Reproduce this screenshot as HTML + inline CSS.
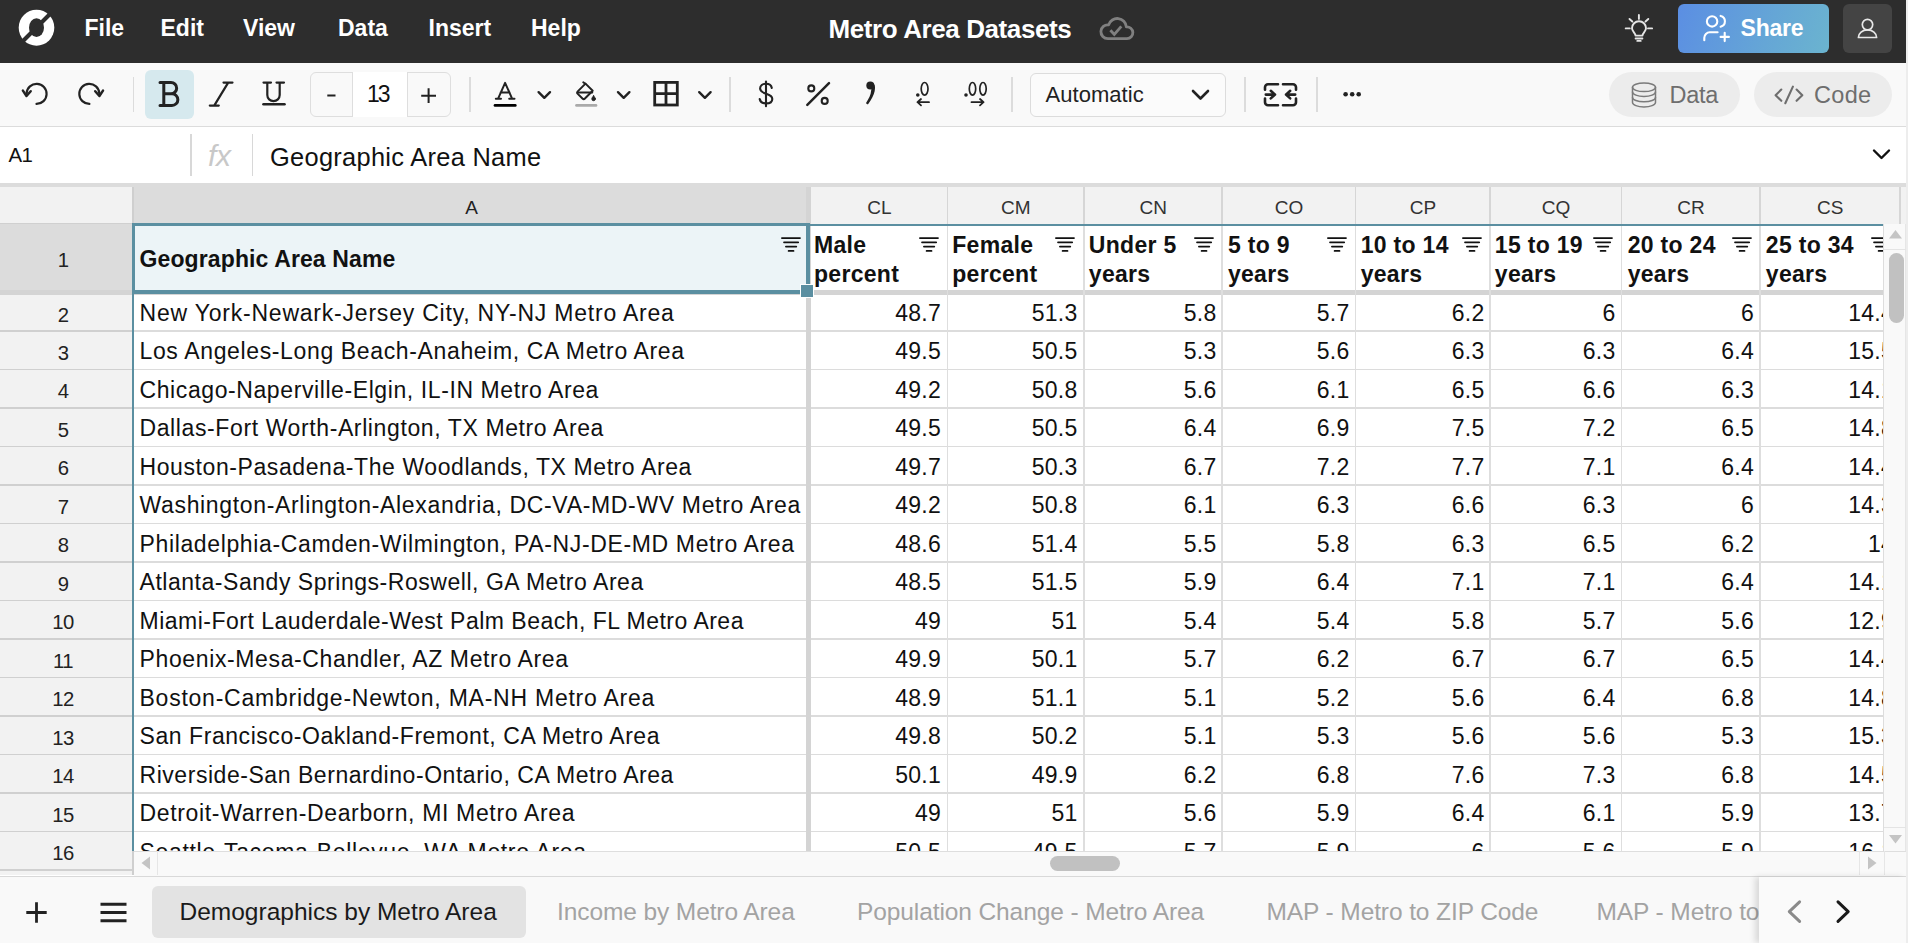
<!DOCTYPE html><html><head><meta charset="utf-8"><style>
*{box-sizing:border-box;margin:0;padding:0}
html,body{width:1908px;height:943px;overflow:hidden;background:#ededed;font-family:"Liberation Sans", sans-serif;}
.ab{position:absolute}
.t{position:absolute;white-space:nowrap;line-height:1}
</style></head><body>
<div class="ab" style="left:0;top:0;width:1906px;height:943px;overflow:hidden;background:#fff">

<div class="ab" style="left:0;top:0;width:1906px;height:63px;background:#2d2d2d"></div>
<div class="t" style="left:84.5px;top:17.2px;font-size:23px;font-weight:700;color:#fff">File</div>
<div class="t" style="left:160.5px;top:17.2px;font-size:23px;font-weight:700;color:#fff">Edit</div>
<div class="t" style="left:243px;top:17.2px;font-size:23px;font-weight:700;color:#fff">View</div>
<div class="t" style="left:338px;top:17.2px;font-size:23px;font-weight:700;color:#fff">Data</div>
<div class="t" style="left:428.5px;top:17.2px;font-size:23px;font-weight:700;color:#fff">Insert</div>
<div class="t" style="left:531px;top:17.2px;font-size:23px;font-weight:700;color:#fff">Help</div>
<div class="t" style="left:828.5px;top:15.8px;font-size:26px;font-weight:700;color:#fff;letter-spacing:-0.4px">Metro Area Datasets</div>
<div class="ab" style="left:1678px;top:4px;width:151px;height:49px;border-radius:6px;background:linear-gradient(110deg,#5b8ee3 0%,#65a6d6 60%,#6bb4cf 100%)"></div>
<div class="t" style="left:1740.5px;top:17.1px;font-size:23px;font-weight:700;color:#fff;letter-spacing:-0.2px">Share</div>
<div class="ab" style="left:1843px;top:4px;width:49px;height:49px;border-radius:6px;background:#444"></div>
<div class="ab" style="left:0;top:63px;width:1906px;height:64px;background:#f9f9f9;border-bottom:1px solid #dcdcdc"></div>
<div class="ab" style="left:145px;top:70px;width:49px;height:49px;border-radius:6px;background:#d6e9ee"></div>
<div class="ab" style="left:132.5px;top:77px;width:1.5px;height:35px;background:#dcdcdc"></div>
<div class="ab" style="left:469px;top:77px;width:1.5px;height:35px;background:#dcdcdc"></div>
<div class="ab" style="left:729px;top:77px;width:1.5px;height:35px;background:#dcdcdc"></div>
<div class="ab" style="left:1011px;top:77px;width:1.5px;height:35px;background:#dcdcdc"></div>
<div class="ab" style="left:1244.2px;top:77px;width:1.5px;height:35px;background:#dcdcdc"></div>
<div class="ab" style="left:1316px;top:77px;width:1.5px;height:35px;background:#dcdcdc"></div>
<div class="ab" style="left:309.5px;top:72px;width:141px;height:44.5px;border:1px solid #dedede;border-radius:6px;background:#f9f9f9"></div>
<div class="ab" style="left:352px;top:72px;width:56px;height:44.5px;border-left:1px solid #dedede;border-right:1px solid #dedede;background:#fff"></div>
<div class="t" style="left:367px;top:83.2px;font-size:23px;color:#111;letter-spacing:-2px">13</div>
<div class="ab" style="left:1030px;top:73px;width:196px;height:44px;border:1px solid #dcdcdc;border-radius:6px;background:#fbfbfb"></div>
<div class="t" style="left:1045.5px;top:83.6px;font-size:22px;color:#222;letter-spacing:0.05px">Automatic</div>
<div class="ab" style="left:1609px;top:72px;width:131px;height:45px;border-radius:23px;background:#ececec"></div>
<div class="ab" style="left:1754px;top:72px;width:138px;height:45px;border-radius:23px;background:#ececec"></div>
<div class="t" style="left:1669.5px;top:84px;font-size:23.5px;color:#6e6e6e;letter-spacing:-0.3px">Data</div>
<div class="t" style="left:1814px;top:84px;font-size:23.5px;color:#6e6e6e;letter-spacing:0.3px">Code</div>
<div class="t" style="left:8.5px;top:145.1px;font-size:20.4px;color:#111;letter-spacing:-0.5px">A1</div>
<div class="ab" style="left:190px;top:134px;width:1.5px;height:42px;background:#d8d8d8"></div>
<div class="ab" style="left:251.5px;top:134px;width:1.5px;height:42px;background:#d8d8d8"></div>
<div class="t" style="left:208px;top:141.2px;font-size:30px;font-style:italic;color:#c8c8c8;letter-spacing:-0.3px">fx</div>
<div class="t" style="left:270px;top:145.4px;font-size:25.4px;color:#111;letter-spacing:0.3px">Geographic Area Name</div>
<div class="ab" style="left:0;top:183px;width:1906px;height:4px;background:#dcdcdc"></div>
<div class="ab" style="left:0;top:187px;width:132px;height:36px;background:#f2f2f2"></div>
<div class="ab" style="left:0;top:223px;width:132px;height:1px;background:#d0d0d0"></div>
<div class="ab" style="left:132px;top:187px;width:1.5px;height:37px;background:#cfcfcf"></div>
<div class="ab" style="left:133.5px;top:187px;width:673px;height:37px;background:#dcdcdc"></div>
<div class="ab" style="left:806px;top:187px;width:5px;height:664px;background:#d4d4d4"></div>
<div class="ab" style="left:811px;top:187px;width:1095px;height:37px;background:#f2f2f2"></div>
<div class="ab" style="left:946.55px;top:187px;width:1.5px;height:37px;background:#d6d6d6"></div>
<div class="t" style="left:811.5px;width:135.79999999999995px;text-align:center;top:198.2px;font-size:19px;color:#333">CL</div>
<div class="ab" style="left:1083.05px;top:187px;width:1.5px;height:37px;background:#d6d6d6"></div>
<div class="t" style="left:948px;width:135.79999999999995px;text-align:center;top:198.2px;font-size:19px;color:#333">CM</div>
<div class="ab" style="left:1221.35px;top:187px;width:1.5px;height:37px;background:#d6d6d6"></div>
<div class="t" style="left:1084.5px;width:137.5999999999999px;text-align:center;top:198.2px;font-size:19px;color:#333">CN</div>
<div class="ab" style="left:1354.55px;top:187px;width:1.5px;height:37px;background:#d6d6d6"></div>
<div class="t" style="left:1222.8px;width:132.5px;text-align:center;top:198.2px;font-size:19px;color:#333">CO</div>
<div class="ab" style="left:1489.25px;top:187px;width:1.5px;height:37px;background:#d6d6d6"></div>
<div class="t" style="left:1356px;width:134.0px;text-align:center;top:198.2px;font-size:19px;color:#333">CP</div>
<div class="ab" style="left:1620.65px;top:187px;width:1.5px;height:37px;background:#d6d6d6"></div>
<div class="t" style="left:1490.7px;width:130.70000000000005px;text-align:center;top:198.2px;font-size:19px;color:#333">CQ</div>
<div class="ab" style="left:1759.25px;top:187px;width:1.5px;height:37px;background:#d6d6d6"></div>
<div class="t" style="left:1622.1px;width:137.9000000000001px;text-align:center;top:198.2px;font-size:19px;color:#333">CR</div>
<div class="ab" style="left:1899.15px;top:187px;width:1.5px;height:37px;background:#d6d6d6"></div>
<div class="t" style="left:1760.7px;width:139.20000000000005px;text-align:center;top:198.2px;font-size:19px;color:#333">CS</div>
<div class="ab" style="left:1989.25px;top:187px;width:1.5px;height:37px;background:#d6d6d6"></div>
<div class="t" style="left:135px;width:673px;text-align:center;top:198.2px;font-size:19px;color:#222">A</div>
<div class="ab" style="left:0;top:224px;width:132px;height:651px;background:#f2f2f2"></div>
<div class="ab" style="left:0;top:224px;width:132px;height:66px;background:#dcdcdc"></div>
<div class="ab" style="left:0;top:290px;width:132px;height:5px;background:#d4d4d4"></div>
<div class="ab" style="left:132px;top:224px;width:1.5px;height:651px;background:#cfcfcf"></div>
<div class="t" style="left:0;width:126px;text-align:center;top:249.81605px;font-size:20.3px;color:#222;letter-spacing:-0.6px">1</div>
<div class="t" style="left:0;width:126px;text-align:center;top:304.61605000000003px;font-size:20.3px;color:#222;letter-spacing:-0.6px">2</div>
<div class="ab" style="left:0;top:330.25px;width:132px;height:1.5px;background:#d0d0d0"></div>
<div class="t" style="left:0;width:126px;text-align:center;top:342.71605px;font-size:20.3px;color:#222;letter-spacing:-0.6px">3</div>
<div class="ab" style="left:0;top:368.75px;width:132px;height:1.5px;background:#d0d0d0"></div>
<div class="t" style="left:0;width:126px;text-align:center;top:381.21605px;font-size:20.3px;color:#222;letter-spacing:-0.6px">4</div>
<div class="ab" style="left:0;top:407.25px;width:132px;height:1.5px;background:#d0d0d0"></div>
<div class="t" style="left:0;width:126px;text-align:center;top:419.71605px;font-size:20.3px;color:#222;letter-spacing:-0.6px">5</div>
<div class="ab" style="left:0;top:445.75px;width:132px;height:1.5px;background:#d0d0d0"></div>
<div class="t" style="left:0;width:126px;text-align:center;top:458.21605px;font-size:20.3px;color:#222;letter-spacing:-0.6px">6</div>
<div class="ab" style="left:0;top:484.25px;width:132px;height:1.5px;background:#d0d0d0"></div>
<div class="t" style="left:0;width:126px;text-align:center;top:496.71605px;font-size:20.3px;color:#222;letter-spacing:-0.6px">7</div>
<div class="ab" style="left:0;top:522.75px;width:132px;height:1.5px;background:#d0d0d0"></div>
<div class="t" style="left:0;width:126px;text-align:center;top:535.21605px;font-size:20.3px;color:#222;letter-spacing:-0.6px">8</div>
<div class="ab" style="left:0;top:561.25px;width:132px;height:1.5px;background:#d0d0d0"></div>
<div class="t" style="left:0;width:126px;text-align:center;top:573.71605px;font-size:20.3px;color:#222;letter-spacing:-0.6px">9</div>
<div class="ab" style="left:0;top:599.75px;width:132px;height:1.5px;background:#d0d0d0"></div>
<div class="t" style="left:0;width:126px;text-align:center;top:612.21605px;font-size:20.3px;color:#222;letter-spacing:-0.6px">10</div>
<div class="ab" style="left:0;top:638.25px;width:132px;height:1.5px;background:#d0d0d0"></div>
<div class="t" style="left:0;width:126px;text-align:center;top:650.71605px;font-size:20.3px;color:#222;letter-spacing:-0.6px">11</div>
<div class="ab" style="left:0;top:676.75px;width:132px;height:1.5px;background:#d0d0d0"></div>
<div class="t" style="left:0;width:126px;text-align:center;top:689.21605px;font-size:20.3px;color:#222;letter-spacing:-0.6px">12</div>
<div class="ab" style="left:0;top:715.25px;width:132px;height:1.5px;background:#d0d0d0"></div>
<div class="t" style="left:0;width:126px;text-align:center;top:727.71605px;font-size:20.3px;color:#222;letter-spacing:-0.6px">13</div>
<div class="ab" style="left:0;top:753.75px;width:132px;height:1.5px;background:#d0d0d0"></div>
<div class="t" style="left:0;width:126px;text-align:center;top:766.21605px;font-size:20.3px;color:#222;letter-spacing:-0.6px">14</div>
<div class="ab" style="left:0;top:792.25px;width:132px;height:1.5px;background:#d0d0d0"></div>
<div class="t" style="left:0;width:126px;text-align:center;top:804.71605px;font-size:20.3px;color:#222;letter-spacing:-0.6px">15</div>
<div class="ab" style="left:0;top:830.75px;width:132px;height:1.5px;background:#d0d0d0"></div>
<div class="t" style="left:0;width:126px;text-align:center;top:843.21605px;font-size:20.3px;color:#222;letter-spacing:-0.6px">16</div>
<div class="ab" style="left:0;top:869.25px;width:132px;height:1.5px;background:#d0d0d0"></div>
<div class="ab" style="left:133.5px;top:224px;width:1749.5px;height:627px;overflow:hidden">
<div class="ab" style="left:0.0px;top:0;width:673px;height:66px;background:#ecf4f7"></div>
<div class="ab" style="left:677.5px;top:0;width:1100px;height:66px;background:#fff"></div>
<div class="ab" style="left:0;top:66.19999999999999px;width:2000px;height:4.4px;background:#d4d4d4"></div>
<div class="ab" style="left:0;top:106.25px;width:2000px;height:1.5px;background:#dcdcdc"></div>
<div class="ab" style="left:0;top:144.75px;width:2000px;height:1.5px;background:#dcdcdc"></div>
<div class="ab" style="left:0;top:183.25px;width:2000px;height:1.5px;background:#dcdcdc"></div>
<div class="ab" style="left:0;top:221.75px;width:2000px;height:1.5px;background:#dcdcdc"></div>
<div class="ab" style="left:0;top:260.25px;width:2000px;height:1.5px;background:#dcdcdc"></div>
<div class="ab" style="left:0;top:298.75px;width:2000px;height:1.5px;background:#dcdcdc"></div>
<div class="ab" style="left:0;top:337.25px;width:2000px;height:1.5px;background:#dcdcdc"></div>
<div class="ab" style="left:0;top:375.75px;width:2000px;height:1.5px;background:#dcdcdc"></div>
<div class="ab" style="left:0;top:414.25px;width:2000px;height:1.5px;background:#dcdcdc"></div>
<div class="ab" style="left:0;top:452.75px;width:2000px;height:1.5px;background:#dcdcdc"></div>
<div class="ab" style="left:0;top:491.25px;width:2000px;height:1.5px;background:#dcdcdc"></div>
<div class="ab" style="left:0;top:529.75px;width:2000px;height:1.5px;background:#dcdcdc"></div>
<div class="ab" style="left:0;top:568.25px;width:2000px;height:1.5px;background:#dcdcdc"></div>
<div class="ab" style="left:0;top:606.75px;width:2000px;height:1.5px;background:#dcdcdc"></div>
<div class="ab" style="left:0;top:645.25px;width:2000px;height:1.5px;background:#dcdcdc"></div>
<div class="ab" style="left:672.5px;top:0;width:5px;height:700px;background:#d4d4d4"></div>
<div class="ab" style="left:813.05px;top:0;width:1.5px;height:700px;background:#dedede"></div>
<div class="ab" style="left:949.55px;top:0;width:1.5px;height:700px;background:#dedede"></div>
<div class="ab" style="left:1087.85px;top:0;width:1.5px;height:700px;background:#dedede"></div>
<div class="ab" style="left:1221.05px;top:0;width:1.5px;height:700px;background:#dedede"></div>
<div class="ab" style="left:1355.75px;top:0;width:1.5px;height:700px;background:#dedede"></div>
<div class="ab" style="left:1487.15px;top:0;width:1.5px;height:700px;background:#dedede"></div>
<div class="ab" style="left:1625.75px;top:0;width:1.5px;height:700px;background:#dedede"></div>
<div class="ab" style="left:1765.65px;top:0;width:1.5px;height:700px;background:#dedede"></div>
<div class="ab" style="left:0;top:0;width:2000px;height:1.8px;background:#5b8fa1"></div>
<div class="t" style="left:6.0px;top:78.33050000000003px;font-size:23px;color:#111;letter-spacing:0.787px">New York-Newark-Jersey City, NY-NJ Metro Area</div>
<div class="t" style="left:678.0px;width:129.5px;text-align:right;top:78.33050000000003px;font-size:23px;color:#111;letter-spacing:0.25px">48.7</div>
<div class="t" style="left:814.5px;width:129.5px;text-align:right;top:78.33050000000003px;font-size:23px;color:#111;letter-spacing:0.25px">51.3</div>
<div class="t" style="left:951.0px;width:132.0px;text-align:right;top:78.33050000000003px;font-size:23px;color:#111;letter-spacing:0.25px">5.8</div>
<div class="t" style="left:1089.3px;width:126.70000000000005px;text-align:right;top:78.33050000000003px;font-size:23px;color:#111;letter-spacing:0.25px">5.7</div>
<div class="t" style="left:1222.5px;width:128.5px;text-align:right;top:78.33050000000003px;font-size:23px;color:#111;letter-spacing:0.25px">6.2</div>
<div class="t" style="left:1357.2px;width:124.79999999999995px;text-align:right;top:78.33050000000003px;font-size:23px;color:#111;letter-spacing:0.25px">6</div>
<div class="t" style="left:1488.6px;width:131.9000000000001px;text-align:right;top:78.33050000000003px;font-size:23px;color:#111;letter-spacing:0.25px">6</div>
<div class="t" style="left:1627.2px;width:133.29999999999995px;text-align:right;top:78.33050000000003px;font-size:23px;color:#111;letter-spacing:0.25px">14.4</div>
<div class="t" style="left:6.0px;top:116.4305px;font-size:23px;color:#111;letter-spacing:0.637px">Los Angeles-Long Beach-Anaheim, CA Metro Area</div>
<div class="t" style="left:678.0px;width:129.5px;text-align:right;top:116.4305px;font-size:23px;color:#111;letter-spacing:0.25px">49.5</div>
<div class="t" style="left:814.5px;width:129.5px;text-align:right;top:116.4305px;font-size:23px;color:#111;letter-spacing:0.25px">50.5</div>
<div class="t" style="left:951.0px;width:132.0px;text-align:right;top:116.4305px;font-size:23px;color:#111;letter-spacing:0.25px">5.3</div>
<div class="t" style="left:1089.3px;width:126.70000000000005px;text-align:right;top:116.4305px;font-size:23px;color:#111;letter-spacing:0.25px">5.6</div>
<div class="t" style="left:1222.5px;width:128.5px;text-align:right;top:116.4305px;font-size:23px;color:#111;letter-spacing:0.25px">6.3</div>
<div class="t" style="left:1357.2px;width:124.79999999999995px;text-align:right;top:116.4305px;font-size:23px;color:#111;letter-spacing:0.25px">6.3</div>
<div class="t" style="left:1488.6px;width:131.9000000000001px;text-align:right;top:116.4305px;font-size:23px;color:#111;letter-spacing:0.25px">6.4</div>
<div class="t" style="left:1627.2px;width:133.29999999999995px;text-align:right;top:116.4305px;font-size:23px;color:#111;letter-spacing:0.25px">15.5</div>
<div class="t" style="left:6.0px;top:154.9305px;font-size:23px;color:#111;letter-spacing:0.592px">Chicago-Naperville-Elgin, IL-IN Metro Area</div>
<div class="t" style="left:678.0px;width:129.5px;text-align:right;top:154.9305px;font-size:23px;color:#111;letter-spacing:0.25px">49.2</div>
<div class="t" style="left:814.5px;width:129.5px;text-align:right;top:154.9305px;font-size:23px;color:#111;letter-spacing:0.25px">50.8</div>
<div class="t" style="left:951.0px;width:132.0px;text-align:right;top:154.9305px;font-size:23px;color:#111;letter-spacing:0.25px">5.6</div>
<div class="t" style="left:1089.3px;width:126.70000000000005px;text-align:right;top:154.9305px;font-size:23px;color:#111;letter-spacing:0.25px">6.1</div>
<div class="t" style="left:1222.5px;width:128.5px;text-align:right;top:154.9305px;font-size:23px;color:#111;letter-spacing:0.25px">6.5</div>
<div class="t" style="left:1357.2px;width:124.79999999999995px;text-align:right;top:154.9305px;font-size:23px;color:#111;letter-spacing:0.25px">6.6</div>
<div class="t" style="left:1488.6px;width:131.9000000000001px;text-align:right;top:154.9305px;font-size:23px;color:#111;letter-spacing:0.25px">6.3</div>
<div class="t" style="left:1627.2px;width:133.29999999999995px;text-align:right;top:154.9305px;font-size:23px;color:#111;letter-spacing:0.25px">14.1</div>
<div class="t" style="left:6.0px;top:193.4305px;font-size:23px;color:#111;letter-spacing:0.610px">Dallas-Fort Worth-Arlington, TX Metro Area</div>
<div class="t" style="left:678.0px;width:129.5px;text-align:right;top:193.4305px;font-size:23px;color:#111;letter-spacing:0.25px">49.5</div>
<div class="t" style="left:814.5px;width:129.5px;text-align:right;top:193.4305px;font-size:23px;color:#111;letter-spacing:0.25px">50.5</div>
<div class="t" style="left:951.0px;width:132.0px;text-align:right;top:193.4305px;font-size:23px;color:#111;letter-spacing:0.25px">6.4</div>
<div class="t" style="left:1089.3px;width:126.70000000000005px;text-align:right;top:193.4305px;font-size:23px;color:#111;letter-spacing:0.25px">6.9</div>
<div class="t" style="left:1222.5px;width:128.5px;text-align:right;top:193.4305px;font-size:23px;color:#111;letter-spacing:0.25px">7.5</div>
<div class="t" style="left:1357.2px;width:124.79999999999995px;text-align:right;top:193.4305px;font-size:23px;color:#111;letter-spacing:0.25px">7.2</div>
<div class="t" style="left:1488.6px;width:131.9000000000001px;text-align:right;top:193.4305px;font-size:23px;color:#111;letter-spacing:0.25px">6.5</div>
<div class="t" style="left:1627.2px;width:133.29999999999995px;text-align:right;top:193.4305px;font-size:23px;color:#111;letter-spacing:0.25px">14.8</div>
<div class="t" style="left:6.0px;top:231.9305px;font-size:23px;color:#111;letter-spacing:0.589px">Houston-Pasadena-The Woodlands, TX Metro Area</div>
<div class="t" style="left:678.0px;width:129.5px;text-align:right;top:231.9305px;font-size:23px;color:#111;letter-spacing:0.25px">49.7</div>
<div class="t" style="left:814.5px;width:129.5px;text-align:right;top:231.9305px;font-size:23px;color:#111;letter-spacing:0.25px">50.3</div>
<div class="t" style="left:951.0px;width:132.0px;text-align:right;top:231.9305px;font-size:23px;color:#111;letter-spacing:0.25px">6.7</div>
<div class="t" style="left:1089.3px;width:126.70000000000005px;text-align:right;top:231.9305px;font-size:23px;color:#111;letter-spacing:0.25px">7.2</div>
<div class="t" style="left:1222.5px;width:128.5px;text-align:right;top:231.9305px;font-size:23px;color:#111;letter-spacing:0.25px">7.7</div>
<div class="t" style="left:1357.2px;width:124.79999999999995px;text-align:right;top:231.9305px;font-size:23px;color:#111;letter-spacing:0.25px">7.1</div>
<div class="t" style="left:1488.6px;width:131.9000000000001px;text-align:right;top:231.9305px;font-size:23px;color:#111;letter-spacing:0.25px">6.4</div>
<div class="t" style="left:1627.2px;width:133.29999999999995px;text-align:right;top:231.9305px;font-size:23px;color:#111;letter-spacing:0.25px">14.4</div>
<div class="t" style="left:6.0px;top:270.4305px;font-size:23px;color:#111;letter-spacing:0.662px">Washington-Arlington-Alexandria, DC-VA-MD-WV Metro Area</div>
<div class="t" style="left:678.0px;width:129.5px;text-align:right;top:270.4305px;font-size:23px;color:#111;letter-spacing:0.25px">49.2</div>
<div class="t" style="left:814.5px;width:129.5px;text-align:right;top:270.4305px;font-size:23px;color:#111;letter-spacing:0.25px">50.8</div>
<div class="t" style="left:951.0px;width:132.0px;text-align:right;top:270.4305px;font-size:23px;color:#111;letter-spacing:0.25px">6.1</div>
<div class="t" style="left:1089.3px;width:126.70000000000005px;text-align:right;top:270.4305px;font-size:23px;color:#111;letter-spacing:0.25px">6.3</div>
<div class="t" style="left:1222.5px;width:128.5px;text-align:right;top:270.4305px;font-size:23px;color:#111;letter-spacing:0.25px">6.6</div>
<div class="t" style="left:1357.2px;width:124.79999999999995px;text-align:right;top:270.4305px;font-size:23px;color:#111;letter-spacing:0.25px">6.3</div>
<div class="t" style="left:1488.6px;width:131.9000000000001px;text-align:right;top:270.4305px;font-size:23px;color:#111;letter-spacing:0.25px">6</div>
<div class="t" style="left:1627.2px;width:133.29999999999995px;text-align:right;top:270.4305px;font-size:23px;color:#111;letter-spacing:0.25px">14.3</div>
<div class="t" style="left:6.0px;top:308.93049999999994px;font-size:23px;color:#111;letter-spacing:0.638px">Philadelphia-Camden-Wilmington, PA-NJ-DE-MD Metro Area</div>
<div class="t" style="left:678.0px;width:129.5px;text-align:right;top:308.93049999999994px;font-size:23px;color:#111;letter-spacing:0.25px">48.6</div>
<div class="t" style="left:814.5px;width:129.5px;text-align:right;top:308.93049999999994px;font-size:23px;color:#111;letter-spacing:0.25px">51.4</div>
<div class="t" style="left:951.0px;width:132.0px;text-align:right;top:308.93049999999994px;font-size:23px;color:#111;letter-spacing:0.25px">5.5</div>
<div class="t" style="left:1089.3px;width:126.70000000000005px;text-align:right;top:308.93049999999994px;font-size:23px;color:#111;letter-spacing:0.25px">5.8</div>
<div class="t" style="left:1222.5px;width:128.5px;text-align:right;top:308.93049999999994px;font-size:23px;color:#111;letter-spacing:0.25px">6.3</div>
<div class="t" style="left:1357.2px;width:124.79999999999995px;text-align:right;top:308.93049999999994px;font-size:23px;color:#111;letter-spacing:0.25px">6.5</div>
<div class="t" style="left:1488.6px;width:131.9000000000001px;text-align:right;top:308.93049999999994px;font-size:23px;color:#111;letter-spacing:0.25px">6.2</div>
<div class="t" style="left:1627.2px;width:133.29999999999995px;text-align:right;top:308.93049999999994px;font-size:23px;color:#111;letter-spacing:0.25px">14</div>
<div class="t" style="left:6.0px;top:347.43049999999994px;font-size:23px;color:#111;letter-spacing:0.536px">Atlanta-Sandy Springs-Roswell, GA Metro Area</div>
<div class="t" style="left:678.0px;width:129.5px;text-align:right;top:347.43049999999994px;font-size:23px;color:#111;letter-spacing:0.25px">48.5</div>
<div class="t" style="left:814.5px;width:129.5px;text-align:right;top:347.43049999999994px;font-size:23px;color:#111;letter-spacing:0.25px">51.5</div>
<div class="t" style="left:951.0px;width:132.0px;text-align:right;top:347.43049999999994px;font-size:23px;color:#111;letter-spacing:0.25px">5.9</div>
<div class="t" style="left:1089.3px;width:126.70000000000005px;text-align:right;top:347.43049999999994px;font-size:23px;color:#111;letter-spacing:0.25px">6.4</div>
<div class="t" style="left:1222.5px;width:128.5px;text-align:right;top:347.43049999999994px;font-size:23px;color:#111;letter-spacing:0.25px">7.1</div>
<div class="t" style="left:1357.2px;width:124.79999999999995px;text-align:right;top:347.43049999999994px;font-size:23px;color:#111;letter-spacing:0.25px">7.1</div>
<div class="t" style="left:1488.6px;width:131.9000000000001px;text-align:right;top:347.43049999999994px;font-size:23px;color:#111;letter-spacing:0.25px">6.4</div>
<div class="t" style="left:1627.2px;width:133.29999999999995px;text-align:right;top:347.43049999999994px;font-size:23px;color:#111;letter-spacing:0.25px">14.1</div>
<div class="t" style="left:6.0px;top:385.93049999999994px;font-size:23px;color:#111;letter-spacing:0.488px">Miami-Fort Lauderdale-West Palm Beach, FL Metro Area</div>
<div class="t" style="left:678.0px;width:129.5px;text-align:right;top:385.93049999999994px;font-size:23px;color:#111;letter-spacing:0.25px">49</div>
<div class="t" style="left:814.5px;width:129.5px;text-align:right;top:385.93049999999994px;font-size:23px;color:#111;letter-spacing:0.25px">51</div>
<div class="t" style="left:951.0px;width:132.0px;text-align:right;top:385.93049999999994px;font-size:23px;color:#111;letter-spacing:0.25px">5.4</div>
<div class="t" style="left:1089.3px;width:126.70000000000005px;text-align:right;top:385.93049999999994px;font-size:23px;color:#111;letter-spacing:0.25px">5.4</div>
<div class="t" style="left:1222.5px;width:128.5px;text-align:right;top:385.93049999999994px;font-size:23px;color:#111;letter-spacing:0.25px">5.8</div>
<div class="t" style="left:1357.2px;width:124.79999999999995px;text-align:right;top:385.93049999999994px;font-size:23px;color:#111;letter-spacing:0.25px">5.7</div>
<div class="t" style="left:1488.6px;width:131.9000000000001px;text-align:right;top:385.93049999999994px;font-size:23px;color:#111;letter-spacing:0.25px">5.6</div>
<div class="t" style="left:1627.2px;width:133.29999999999995px;text-align:right;top:385.93049999999994px;font-size:23px;color:#111;letter-spacing:0.25px">12.9</div>
<div class="t" style="left:6.0px;top:424.43049999999994px;font-size:23px;color:#111;letter-spacing:0.628px">Phoenix-Mesa-Chandler, AZ Metro Area</div>
<div class="t" style="left:678.0px;width:129.5px;text-align:right;top:424.43049999999994px;font-size:23px;color:#111;letter-spacing:0.25px">49.9</div>
<div class="t" style="left:814.5px;width:129.5px;text-align:right;top:424.43049999999994px;font-size:23px;color:#111;letter-spacing:0.25px">50.1</div>
<div class="t" style="left:951.0px;width:132.0px;text-align:right;top:424.43049999999994px;font-size:23px;color:#111;letter-spacing:0.25px">5.7</div>
<div class="t" style="left:1089.3px;width:126.70000000000005px;text-align:right;top:424.43049999999994px;font-size:23px;color:#111;letter-spacing:0.25px">6.2</div>
<div class="t" style="left:1222.5px;width:128.5px;text-align:right;top:424.43049999999994px;font-size:23px;color:#111;letter-spacing:0.25px">6.7</div>
<div class="t" style="left:1357.2px;width:124.79999999999995px;text-align:right;top:424.43049999999994px;font-size:23px;color:#111;letter-spacing:0.25px">6.7</div>
<div class="t" style="left:1488.6px;width:131.9000000000001px;text-align:right;top:424.43049999999994px;font-size:23px;color:#111;letter-spacing:0.25px">6.5</div>
<div class="t" style="left:1627.2px;width:133.29999999999995px;text-align:right;top:424.43049999999994px;font-size:23px;color:#111;letter-spacing:0.25px">14.4</div>
<div class="t" style="left:6.0px;top:462.93049999999994px;font-size:23px;color:#111;letter-spacing:0.759px">Boston-Cambridge-Newton, MA-NH Metro Area</div>
<div class="t" style="left:678.0px;width:129.5px;text-align:right;top:462.93049999999994px;font-size:23px;color:#111;letter-spacing:0.25px">48.9</div>
<div class="t" style="left:814.5px;width:129.5px;text-align:right;top:462.93049999999994px;font-size:23px;color:#111;letter-spacing:0.25px">51.1</div>
<div class="t" style="left:951.0px;width:132.0px;text-align:right;top:462.93049999999994px;font-size:23px;color:#111;letter-spacing:0.25px">5.1</div>
<div class="t" style="left:1089.3px;width:126.70000000000005px;text-align:right;top:462.93049999999994px;font-size:23px;color:#111;letter-spacing:0.25px">5.2</div>
<div class="t" style="left:1222.5px;width:128.5px;text-align:right;top:462.93049999999994px;font-size:23px;color:#111;letter-spacing:0.25px">5.6</div>
<div class="t" style="left:1357.2px;width:124.79999999999995px;text-align:right;top:462.93049999999994px;font-size:23px;color:#111;letter-spacing:0.25px">6.4</div>
<div class="t" style="left:1488.6px;width:131.9000000000001px;text-align:right;top:462.93049999999994px;font-size:23px;color:#111;letter-spacing:0.25px">6.8</div>
<div class="t" style="left:1627.2px;width:133.29999999999995px;text-align:right;top:462.93049999999994px;font-size:23px;color:#111;letter-spacing:0.25px">14.8</div>
<div class="t" style="left:6.0px;top:501.43049999999994px;font-size:23px;color:#111;letter-spacing:0.559px">San Francisco-Oakland-Fremont, CA Metro Area</div>
<div class="t" style="left:678.0px;width:129.5px;text-align:right;top:501.43049999999994px;font-size:23px;color:#111;letter-spacing:0.25px">49.8</div>
<div class="t" style="left:814.5px;width:129.5px;text-align:right;top:501.43049999999994px;font-size:23px;color:#111;letter-spacing:0.25px">50.2</div>
<div class="t" style="left:951.0px;width:132.0px;text-align:right;top:501.43049999999994px;font-size:23px;color:#111;letter-spacing:0.25px">5.1</div>
<div class="t" style="left:1089.3px;width:126.70000000000005px;text-align:right;top:501.43049999999994px;font-size:23px;color:#111;letter-spacing:0.25px">5.3</div>
<div class="t" style="left:1222.5px;width:128.5px;text-align:right;top:501.43049999999994px;font-size:23px;color:#111;letter-spacing:0.25px">5.6</div>
<div class="t" style="left:1357.2px;width:124.79999999999995px;text-align:right;top:501.43049999999994px;font-size:23px;color:#111;letter-spacing:0.25px">5.6</div>
<div class="t" style="left:1488.6px;width:131.9000000000001px;text-align:right;top:501.43049999999994px;font-size:23px;color:#111;letter-spacing:0.25px">5.3</div>
<div class="t" style="left:1627.2px;width:133.29999999999995px;text-align:right;top:501.43049999999994px;font-size:23px;color:#111;letter-spacing:0.25px">15.3</div>
<div class="t" style="left:6.0px;top:539.9304999999999px;font-size:23px;color:#111;letter-spacing:0.545px">Riverside-San Bernardino-Ontario, CA Metro Area</div>
<div class="t" style="left:678.0px;width:129.5px;text-align:right;top:539.9304999999999px;font-size:23px;color:#111;letter-spacing:0.25px">50.1</div>
<div class="t" style="left:814.5px;width:129.5px;text-align:right;top:539.9304999999999px;font-size:23px;color:#111;letter-spacing:0.25px">49.9</div>
<div class="t" style="left:951.0px;width:132.0px;text-align:right;top:539.9304999999999px;font-size:23px;color:#111;letter-spacing:0.25px">6.2</div>
<div class="t" style="left:1089.3px;width:126.70000000000005px;text-align:right;top:539.9304999999999px;font-size:23px;color:#111;letter-spacing:0.25px">6.8</div>
<div class="t" style="left:1222.5px;width:128.5px;text-align:right;top:539.9304999999999px;font-size:23px;color:#111;letter-spacing:0.25px">7.6</div>
<div class="t" style="left:1357.2px;width:124.79999999999995px;text-align:right;top:539.9304999999999px;font-size:23px;color:#111;letter-spacing:0.25px">7.3</div>
<div class="t" style="left:1488.6px;width:131.9000000000001px;text-align:right;top:539.9304999999999px;font-size:23px;color:#111;letter-spacing:0.25px">6.8</div>
<div class="t" style="left:1627.2px;width:133.29999999999995px;text-align:right;top:539.9304999999999px;font-size:23px;color:#111;letter-spacing:0.25px">14.5</div>
<div class="t" style="left:6.0px;top:578.4304999999999px;font-size:23px;color:#111;letter-spacing:0.656px">Detroit-Warren-Dearborn, MI Metro Area</div>
<div class="t" style="left:678.0px;width:129.5px;text-align:right;top:578.4304999999999px;font-size:23px;color:#111;letter-spacing:0.25px">49</div>
<div class="t" style="left:814.5px;width:129.5px;text-align:right;top:578.4304999999999px;font-size:23px;color:#111;letter-spacing:0.25px">51</div>
<div class="t" style="left:951.0px;width:132.0px;text-align:right;top:578.4304999999999px;font-size:23px;color:#111;letter-spacing:0.25px">5.6</div>
<div class="t" style="left:1089.3px;width:126.70000000000005px;text-align:right;top:578.4304999999999px;font-size:23px;color:#111;letter-spacing:0.25px">5.9</div>
<div class="t" style="left:1222.5px;width:128.5px;text-align:right;top:578.4304999999999px;font-size:23px;color:#111;letter-spacing:0.25px">6.4</div>
<div class="t" style="left:1357.2px;width:124.79999999999995px;text-align:right;top:578.4304999999999px;font-size:23px;color:#111;letter-spacing:0.25px">6.1</div>
<div class="t" style="left:1488.6px;width:131.9000000000001px;text-align:right;top:578.4304999999999px;font-size:23px;color:#111;letter-spacing:0.25px">5.9</div>
<div class="t" style="left:1627.2px;width:133.29999999999995px;text-align:right;top:578.4304999999999px;font-size:23px;color:#111;letter-spacing:0.25px">13.7</div>
<div class="t" style="left:6.0px;top:616.9304999999999px;font-size:23px;color:#111;letter-spacing:0.653px">Seattle-Tacoma-Bellevue, WA Metro Area</div>
<div class="t" style="left:678.0px;width:129.5px;text-align:right;top:616.9304999999999px;font-size:23px;color:#111;letter-spacing:0.25px">50.5</div>
<div class="t" style="left:814.5px;width:129.5px;text-align:right;top:616.9304999999999px;font-size:23px;color:#111;letter-spacing:0.25px">49.5</div>
<div class="t" style="left:951.0px;width:132.0px;text-align:right;top:616.9304999999999px;font-size:23px;color:#111;letter-spacing:0.25px">5.7</div>
<div class="t" style="left:1089.3px;width:126.70000000000005px;text-align:right;top:616.9304999999999px;font-size:23px;color:#111;letter-spacing:0.25px">5.9</div>
<div class="t" style="left:1222.5px;width:128.5px;text-align:right;top:616.9304999999999px;font-size:23px;color:#111;letter-spacing:0.25px">6</div>
<div class="t" style="left:1357.2px;width:124.79999999999995px;text-align:right;top:616.9304999999999px;font-size:23px;color:#111;letter-spacing:0.25px">5.6</div>
<div class="t" style="left:1488.6px;width:131.9000000000001px;text-align:right;top:616.9304999999999px;font-size:23px;color:#111;letter-spacing:0.25px">5.9</div>
<div class="t" style="left:1627.2px;width:133.29999999999995px;text-align:right;top:616.9304999999999px;font-size:23px;color:#111;letter-spacing:0.25px">16.1</div>
<div class="t" style="left:6.0px;top:23.8305px;font-size:23px;font-weight:700;color:#111;letter-spacing:0.12px">Geographic Area Name</div>
<div class="t" style="left:680.5px;top:10.130499999999984px;font-size:23px;font-weight:700;color:#111;letter-spacing:0.3px">Male</div>
<div class="t" style="left:680.5px;top:38.930499999999995px;font-size:23px;font-weight:700;color:#111;letter-spacing:0.3px">percent</div>
<div class="t" style="left:818.6999999999999px;top:10.130499999999984px;font-size:23px;font-weight:700;color:#111;letter-spacing:0.3px">Female</div>
<div class="t" style="left:818.6999999999999px;top:38.930499999999995px;font-size:23px;font-weight:700;color:#111;letter-spacing:0.3px">percent</div>
<div class="t" style="left:955.3000000000002px;top:10.130499999999984px;font-size:23px;font-weight:700;color:#111;letter-spacing:0.3px">Under 5</div>
<div class="t" style="left:955.3000000000002px;top:38.930499999999995px;font-size:23px;font-weight:700;color:#111;letter-spacing:0.3px">years</div>
<div class="t" style="left:1094.3999999999999px;top:10.130499999999984px;font-size:23px;font-weight:700;color:#111;letter-spacing:0.3px">5 to 9</div>
<div class="t" style="left:1094.3999999999999px;top:38.930499999999995px;font-size:23px;font-weight:700;color:#111;letter-spacing:0.3px">years</div>
<div class="t" style="left:1227.1999999999998px;top:10.130499999999984px;font-size:23px;font-weight:700;color:#111;letter-spacing:0.3px">10 to 14</div>
<div class="t" style="left:1227.1999999999998px;top:38.930499999999995px;font-size:23px;font-weight:700;color:#111;letter-spacing:0.3px">years</div>
<div class="t" style="left:1361.3px;top:10.130499999999984px;font-size:23px;font-weight:700;color:#111;letter-spacing:0.3px">15 to 19</div>
<div class="t" style="left:1361.3px;top:38.930499999999995px;font-size:23px;font-weight:700;color:#111;letter-spacing:0.3px">years</div>
<div class="t" style="left:1494.2px;top:10.130499999999984px;font-size:23px;font-weight:700;color:#111;letter-spacing:0.3px">20 to 24</div>
<div class="t" style="left:1494.2px;top:38.930499999999995px;font-size:23px;font-weight:700;color:#111;letter-spacing:0.3px">years</div>
<div class="t" style="left:1632.3px;top:10.130499999999984px;font-size:23px;font-weight:700;color:#111;letter-spacing:0.3px">25 to 34</div>
<div class="t" style="left:1632.3px;top:38.930499999999995px;font-size:23px;font-weight:700;color:#111;letter-spacing:0.3px">years</div>
<svg class="ab" style="left:646.3px;top:10.900000000000006px" width="22" height="20" viewBox="0 0 22 20"><path d="M1.9 3H20M4 7.3H18.2M5.9 11.6H16.3M8.6 15.9H13.5" stroke="#111" stroke-width="1.75" stroke-linecap="round"/></svg>
<svg class="ab" style="left:784.3px;top:10.900000000000006px" width="22" height="20" viewBox="0 0 22 20"><path d="M1.9 3H20M4 7.3H18.2M5.9 11.6H16.3M8.6 15.9H13.5" stroke="#111" stroke-width="1.75" stroke-linecap="round"/></svg>
<svg class="ab" style="left:920.8px;top:10.900000000000006px" width="22" height="20" viewBox="0 0 22 20"><path d="M1.9 3H20M4 7.3H18.2M5.9 11.6H16.3M8.6 15.9H13.5" stroke="#111" stroke-width="1.75" stroke-linecap="round"/></svg>
<svg class="ab" style="left:1059.1px;top:10.900000000000006px" width="22" height="20" viewBox="0 0 22 20"><path d="M1.9 3H20M4 7.3H18.2M5.9 11.6H16.3M8.6 15.9H13.5" stroke="#111" stroke-width="1.75" stroke-linecap="round"/></svg>
<svg class="ab" style="left:1192.3px;top:10.900000000000006px" width="22" height="20" viewBox="0 0 22 20"><path d="M1.9 3H20M4 7.3H18.2M5.9 11.6H16.3M8.6 15.9H13.5" stroke="#111" stroke-width="1.75" stroke-linecap="round"/></svg>
<svg class="ab" style="left:1327.0px;top:10.900000000000006px" width="22" height="20" viewBox="0 0 22 20"><path d="M1.9 3H20M4 7.3H18.2M5.9 11.6H16.3M8.6 15.9H13.5" stroke="#111" stroke-width="1.75" stroke-linecap="round"/></svg>
<svg class="ab" style="left:1458.4px;top:10.900000000000006px" width="22" height="20" viewBox="0 0 22 20"><path d="M1.9 3H20M4 7.3H18.2M5.9 11.6H16.3M8.6 15.9H13.5" stroke="#111" stroke-width="1.75" stroke-linecap="round"/></svg>
<svg class="ab" style="left:1597.0px;top:10.900000000000006px" width="22" height="20" viewBox="0 0 22 20"><path d="M1.9 3H20M4 7.3H18.2M5.9 11.6H16.3M8.6 15.9H13.5" stroke="#111" stroke-width="1.75" stroke-linecap="round"/></svg>
<svg class="ab" style="left:1736.9px;top:10.900000000000006px" width="22" height="20" viewBox="0 0 22 20"><path d="M1.9 3H20M4 7.3H18.2M5.9 11.6H16.3M8.6 15.9H13.5" stroke="#111" stroke-width="1.75" stroke-linecap="round"/></svg>
</div>
<div class="ab" style="left:132px;top:224px;width:2px;height:627px;background:#5b8fa1"></div>
<div class="ab" style="left:132px;top:223.2px;width:678px;height:71.2px;border:3.9px solid #5b8fa1;border-right-width:4px;border-bottom-width:4.3px"></div>
<div class="ab" style="left:799.8px;top:283.7px;width:14.4px;height:14.2px;background:#5b8fa1;border:1.2px solid #fff"></div>
<div class="ab" style="left:1883.2px;top:224px;width:22.8px;height:627px;background:#f9f9f9;border-left:1.5px solid #dddddd;border-right:1px solid #e6e6e6"></div>
<div class="ab" style="left:1883.5px;top:248.5px;width:22.5px;height:1px;background:#e4e4e4"></div>
<div class="ab" style="left:1883.5px;top:826.5px;width:22.5px;height:1px;background:#e4e4e4"></div>
<svg class="ab" style="left:1883.5px;top:224px" width="23" height="25"><path d="M5 14.5L11.5 6L18 14.5Z" fill="#c4c4c4"/></svg>
<svg class="ab" style="left:1883.5px;top:827px" width="23" height="24"><path d="M5 8L11.5 16.5L18 8Z" fill="#c4c4c4"/></svg>
<div class="ab" style="left:1888.5px;top:253px;width:15.5px;height:70px;border-radius:8px;background:#c1c1c1"></div>
<div class="ab" style="left:133.5px;top:850.5px;width:1772.5px;height:25.5px;background:#f9f9f9;border-top:1.3px solid #dedede"></div>
<div class="ab" style="left:157px;top:851px;width:1px;height:24px;background:#e6e6e6"></div>
<div class="ab" style="left:1859px;top:851px;width:1px;height:24px;background:#e6e6e6"></div>
<div class="ab" style="left:1883.5px;top:851px;width:1px;height:24px;background:#e6e6e6"></div>
<svg class="ab" style="left:133.5px;top:851px" width="24" height="24"><path d="M16 5.5L7.5 12L16 18.5Z" fill="#c4c4c4"/></svg>
<svg class="ab" style="left:1859.5px;top:851px" width="24" height="24"><path d="M8 5.5L16.5 12L8 18.5Z" fill="#c4c4c4"/></svg>
<div class="ab" style="left:1050px;top:855.5px;width:70px;height:15.5px;border-radius:8px;background:#c1c1c1"></div>
<div class="ab" style="left:0;top:875.8px;width:1906px;height:68px;background:#f9f9f9;border-top:1.5px solid #d9d9d9"></div>
<div class="ab" style="left:152px;top:885.5px;width:373.5px;height:52px;border-radius:6px;background:#e3e3e3"></div>
<div class="t" style="left:179.5px;top:900.4px;font-size:24.5px;color:#1a1a1a">Demographics by Metro Area</div>
<div class="t" style="left:557px;top:900.4px;font-size:24.5px;color:#a3a3a3;letter-spacing:-0.1px">Income by Metro Area</div>
<div class="t" style="left:857px;top:900.4px;font-size:24.5px;color:#a3a3a3;letter-spacing:-0.1px">Population Change - Metro Area</div>
<div class="t" style="left:1266.5px;top:900.4px;font-size:24.5px;color:#a3a3a3;letter-spacing:-0.1px">MAP - Metro to ZIP Code</div>
<div class="t" style="left:1596.5px;top:900.4px;font-size:24.5px;color:#a3a3a3;letter-spacing:-0.1px">MAP - Metro to Census Tract</div>
<div class="ab" style="left:1759px;top:877.3px;width:147px;height:66px;background:#fafafa;box-shadow:-4px 0 6px rgba(0,0,0,0.13)"></div>
<svg class="ab" style="left:0;top:0" width="1908" height="943" viewBox="0 0 1908 943" fill="none" stroke-linecap="round" stroke-linejoin="round">
<g><ellipse cx="36.5" cy="27.7" rx="17.8" ry="18" fill="#fff"/><ellipse cx="36.5" cy="27.7" rx="7.5" ry="9.4" fill="#2d2d2d"/><path d="M21.5 42.5 L50.5 13.5" stroke="#2d2d2d" stroke-width="4" stroke-linecap="butt"/></g>
<path d="M1107.8 38.6 A6.9 6.9 0 1 1 1108.63 24.85 A9.1 9.1 0 0 1 1126.37 26.83 A5.9 5.9 0 1 1 1127 38.6 Z" stroke="#808080" stroke-width="2.8"/><path d="M1110.4 30.3 l3.9 4.2 l7 -8.2" stroke="#808080" stroke-width="2.8" stroke-linecap="butt" stroke-linejoin="miter"/>
<g stroke="#e6e6e6" stroke-width="1.9"><path d="M1635.5 35.6 C1635.5 33 1632 31.5 1632 28.2 A7 7 0 0 1 1646 28.2 C1646 31.5 1642.5 33 1642.5 35.6 Z"/><path d="M1635.6 38.5 H1642.4 M1637.3 40.9 H1640.7"/><path d="M1638.9 14.9 V18.9 M1629.5 19 L1632.3 21.5 M1648.3 19 L1645.5 21.5 M1625.7 28.4 H1629.8 M1648 28.4 H1652.1"/></g>
<g stroke="#fff" stroke-width="2.1"><circle cx="1712.1" cy="21.4" r="5.2"/><path d="M1720.6 15.9 a5.6 5.6 0 0 1 0 10.9"/><path d="M1704.3 40.3 v-2.5 a5.5 5.5 0 0 1 5.5 -5.5 h7.8"/><path d="M1724.7 32.8 V41.1 M1720.6 36.9 H1728.9"/></g>
<g stroke="#e8e8e8" stroke-width="1.7"><circle cx="1867.5" cy="24.6" r="5.2"/><path d="M1858.4 37.5 a9.1 7.6 0 0 1 18.2 0 z"/></g>
<path d="M327.3 95.6 H335.5 M421.2 95.7 H436 M428.6 88.3 V103.1" stroke="#222" stroke-width="2" stroke-linecap="butt"/>
<g stroke="#222" stroke-width="2.2"><path d="M36.5 103.9 A10 10 0 1 0 26.6 93.2"/><path d="M22.9 90.6 L26.5 96 L30.7 91.2" stroke-width="2.5"/><path d="M89.4 103.9 A10 10 0 1 1 99.3 93.2"/><path d="M103 90.6 L99.4 96 L95.2 91.2" stroke-width="2.5"/></g>
<g stroke="#222" stroke-width="3" stroke-linecap="round"><path d="M160 82.5 H171 a5.6 5.6 0 0 1 0 11.3 H163.8 M163.8 82.5 V105.5 M160 105.5 H172 a5.85 5.85 0 0 0 0 -11.7 H163.8"/></g>
<g stroke="#222" stroke-width="2.2"><path d="M223.5 82.6 H232.5 M209.8 105.6 H218.8 M228.2 82.6 L214.2 105.6"/></g>
<g stroke="#222" stroke-width="2.2"><path d="M263.5 82.6 H271 M276.5 82.6 H284 M267.3 82.6 V95 a6.2 6.2 0 0 0 12.4 0 V82.6"/><path d="M263.5 104.3 H284.5" stroke-width="2.6"/></g>
<g stroke="#222" stroke-width="2"><path d="M498 98.8 L505.1 82.8 L512.2 98.8 M500.6 92.5 H509.6 M495.8 98.8 H501 M509.2 98.8 H514.5"/><path d="M495 105.4 H515.3" stroke="#000" stroke-width="2.7"/></g>
<path d="M538.5999999999999 92.2 L544.3 97.8 L550.0 92.2" stroke="#222" stroke-width="2.4"/>
<path d="M618.0 92.2 L623.7 97.8 L629.4000000000001 92.2" stroke="#222" stroke-width="2.4"/>
<path d="M699.1999999999999 92.2 L704.9 97.8 L710.6 92.2" stroke="#222" stroke-width="2.4"/>
<g transform="translate(575.6 80.9) scale(0.9)" stroke="#222" stroke-width="2.2"><path d="m19 11-8-8-8.6 8.6a2 2 0 0 0 0 2.8l5.2 5.2c.8.8 2 .8 2.8 0L19 11Z"/><path d="M8.5 1.5 11 3.5"/><path d="M2.5 13h16"/><path d="M22 20a2 2 0 1 1-4 0c0-1.6 1.7-2.4 2-4 .3 1.6 2 2.4 2 4Z" fill="#222" stroke-width="1"/></g>
<path d="M576.5 105.4 H596" stroke="#aaa" stroke-width="2.7"/>
<g stroke="#222" stroke-width="2.8" stroke-linecap="butt" stroke-linejoin="miter"><rect x="654.7" y="82.4" width="22.6" height="22.6"/><path d="M666 82.4 V105 M654.7 93.7 H677.3"/></g>
<g stroke="#222" stroke-width="2.1"><path d="M771.8 88 c-0.5 -2.8 -3 -4.2 -5.8 -4.2 c-3.5 0 -5.9 2 -5.9 4.8 c0 6.5 12.2 3.7 12.2 10.3 c0 2.8 -2.6 4.5 -6.3 4.5 c-3.3 0 -5.8 -1.6 -6.3 -4.4"/><path d="M766 81.5 V106.3"/></g>
<g stroke="#222" stroke-width="2.1"><circle cx="811.3" cy="88.4" r="3"/><circle cx="824.7" cy="100.9" r="3"/><path d="M807.3 104.8 L829 83.2" stroke-width="2.5"/></g>
<g fill="#222"><circle cx="870.3" cy="85.5" r="4"/><path d="M872.5 83 c3 1 2.8 5 2.2 8 c-0.8 4 -3 8 -6.8 13.5 l-2 -1.2 c3 -4.8 5 -8.5 5.2 -12.5 z"/></g>
<g stroke="#222" stroke-width="1.8"><ellipse cx="924.6" cy="88.8" rx="3.4" ry="6.3" stroke-width="1.7"/><circle cx="917.8" cy="95" r="0.9" fill="#222"/><path d="M929 102.2 H917.5 M921 99 L917.5 102.2 L921 105.4"/><circle cx="966" cy="95" r="0.9" fill="#222"/><ellipse cx="972.5" cy="88.8" rx="3.2" ry="6.3" stroke-width="1.7"/><ellipse cx="983" cy="88.8" rx="3.2" ry="6.3" stroke-width="1.7"/><path d="M971.5 102.2 H983.5 M980 99 L983.5 102.2 L980 105.4"/></g>
<path d="M1193 91 L1200.5 98.5 L1208 91" stroke="#222" stroke-width="2.6"/>
<g stroke="#222" stroke-width="2.6"><path d="M1278 84.2 H1268 a3 3 0 0 0 -3 3 V89.8"/><path d="M1283 84.2 H1293 a3 3 0 0 1 3 3 V89.8"/><path d="M1265 98.6 V102.2 a3 3 0 0 0 3 3 H1278"/><path d="M1296 98.6 V102.2 a3 3 0 0 1 -3 3 H1283"/><path d="M1265.8 94.6 H1275 M1270.8 90.8 L1275 94.6 L1270.8 98.4"/><path d="M1295.2 94.6 H1286 M1290.2 90.8 L1286 94.6 L1290.2 98.4"/></g>
<g fill="#222"><circle cx="1345.6" cy="94.2" r="2.3"/><circle cx="1352.2" cy="94.2" r="2.3"/><circle cx="1358.7" cy="94.2" r="2.3"/></g>
<g stroke="#7a7a7a" stroke-width="1.5"><ellipse cx="1644" cy="87.3" rx="11.5" ry="4.3"/><path d="M1632.5 87.3 V102.6 a11.5 4.3 0 0 0 23 0 V87.3"/><path d="M1632.5 92.1 a11.5 4.3 0 0 0 23 0 M1632.5 97.4 a11.5 4.3 0 0 0 23 0"/></g>
<g stroke="#6e6e6e" stroke-width="2.1"><path d="M1781.3 89.6 L1775.6 95.2 L1781.3 100.8 M1796.6 89.6 L1802.3 95.2 L1796.6 100.8 M1792.9 86.6 L1785.3 103.2"/></g>
<path d="M1874 150.5 L1881.5 158 L1889 150.5" stroke="#111" stroke-width="2.4"/>
<path d="M36.5 902.3 V922.7 M26.3 912.5 H46.7" stroke="#222" stroke-width="2.8" stroke-linecap="butt"/>
<path d="M100.5 904.3 H126.5 M100.5 912.5 H126.5 M100.5 920.7 H126.5" stroke="#222" stroke-width="2.9" stroke-linecap="butt"/>
<path d="M1799.6 901.8 L1789.3 911.6 L1799.6 921.4" stroke="#8a8a8a" stroke-width="3"/>
<path d="M1838 901.8 L1848.2 911.6 L1838 921.4" stroke="#1a1a1a" stroke-width="3"/>
</svg>
</div></body></html>
